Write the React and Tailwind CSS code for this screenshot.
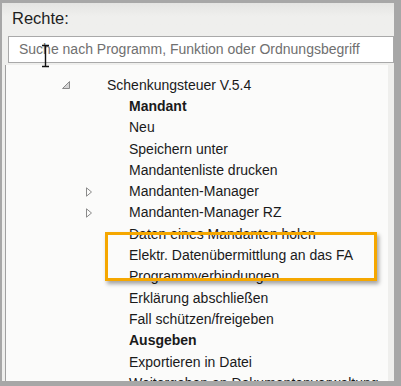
const rows = [
  { label: "Schenkungsteuer V.5.4", level: 1, tri: "open" },
  { label: "Mandant", level: 2, bold: true },
  { label: "Neu", level: 2 },
  { label: "Speichern unter", level: 2 },
  { label: "Mandantenliste drucken", level: 2 },
  { label: "Mandanten-Manager", level: 2, tri: "closed" },
  { label: "Mandanten-Manager RZ", level: 2, tri: "closed" },
  { label: "Daten eines Mandanten holen", level: 2 },
  { label: "Elektr. Datenübermittlung an das FA", level: 2 },
  { label: "Programmverbindungen", level: 2 },
  { label: "Erklärung abschließen", level: 2 },
  { label: "Fall schützen/freigeben", level: 2 },
  { label: "Ausgeben", level: 2, bold: true },
  { label: "Exportieren in Datei", level: 2 },
  { label: "Weitergeben an Dokumentenverwaltung", level: 2 },
];

const OpenTriangle = () => (
  <svg width="10" height="10" viewBox="0 0 10 10">
    <path d="M8.5 1.5 L8.5 8.5 L1.5 8.5 Z" fill="#d4d4d4" stroke="#8a8a8a" strokeWidth="1" />
  </svg>
);

const ClosedTriangle = () => (
  <svg width="8" height="10" viewBox="0 0 8 10">
    <path d="M1.5 0.8 L6.5 5 L1.5 9.2 Z" fill="none" stroke="#8a8a8a" strokeWidth="1" />
  </svg>
);

const TreeRow = ({ row }) => {
  const lead = row.level === 1 ? "w-[101px] pl-[55px]" : "w-[123px] pl-[79px]";
  return (
    <div className="flex items-center h-[21.3px] shrink-0">
      <div className={`${lead} shrink-0 flex items-center`}>
        {row.tri === "open" && <OpenTriangle />}
        {row.tri === "closed" && <ClosedTriangle />}
      </div>
      <span className={`text-[14px] text-[#1a1a1a] whitespace-nowrap ${row.bold ? "font-bold" : ""}`}>
        {row.label}
      </span>
    </div>
  );
};

export default function App() {
  return (
    <div
      className="relative w-[401px] h-[386px] bg-[#a7a7a7] pt-[3px] pl-[2px] pr-[7px] pb-[5px] overflow-hidden"
      style={{ fontFamily: '"Liberation Sans", Arial, sans-serif' }}
    >
      <div className="h-full flex flex-col bg-[#efefed]">
        {/* Header */}
        <div className="h-[33px] shrink-0 pl-[10px] pt-[3px] bg-gradient-to-b from-[#e4e4e2] to-[#efefed] to-40%">
          <span className="text-[16.5px] text-[#1e1e1e]">Rechte:</span>
        </div>

        {/* Search */}
        <div className="ml-[6px] h-[27px] shrink-0 border border-[#a9a9a9] bg-white flex items-center pl-[10px]">
          <span className="text-[14px] text-[#707070] whitespace-nowrap">
            Suche nach Programm, Funktion oder Ordnungsbegriff
          </span>
        </div>

        {/* Tree */}
        <div className="mt-[2px] ml-[3px] mr-[6px] flex-1 flex flex-col overflow-hidden bg-[#fbfbfa] border-l border-[#a0a0a0] pt-[9.5px]">
          {rows.map((row) => (
            <TreeRow key={row.label} row={row} />
          ))}
        </div>
      </div>

      {/* Highlight box */}
      <div className="absolute left-[105px] top-[232px] w-[272px] h-[49px] border-[3px] border-[#f5a700] shadow-[2px_3px_4px_rgba(0,0,0,0.35)]" />

      {/* I-beam cursor */}
      <svg className="absolute left-[41px] top-[44px]" width="9" height="24" viewBox="0 0 9 24">
        <path d="M1 1.5 H8 M4.5 1.5 V22.5 M1 22.5 H8" stroke="#111" strokeWidth="1.4" fill="none" />
      </svg>
    </div>
  );
}
